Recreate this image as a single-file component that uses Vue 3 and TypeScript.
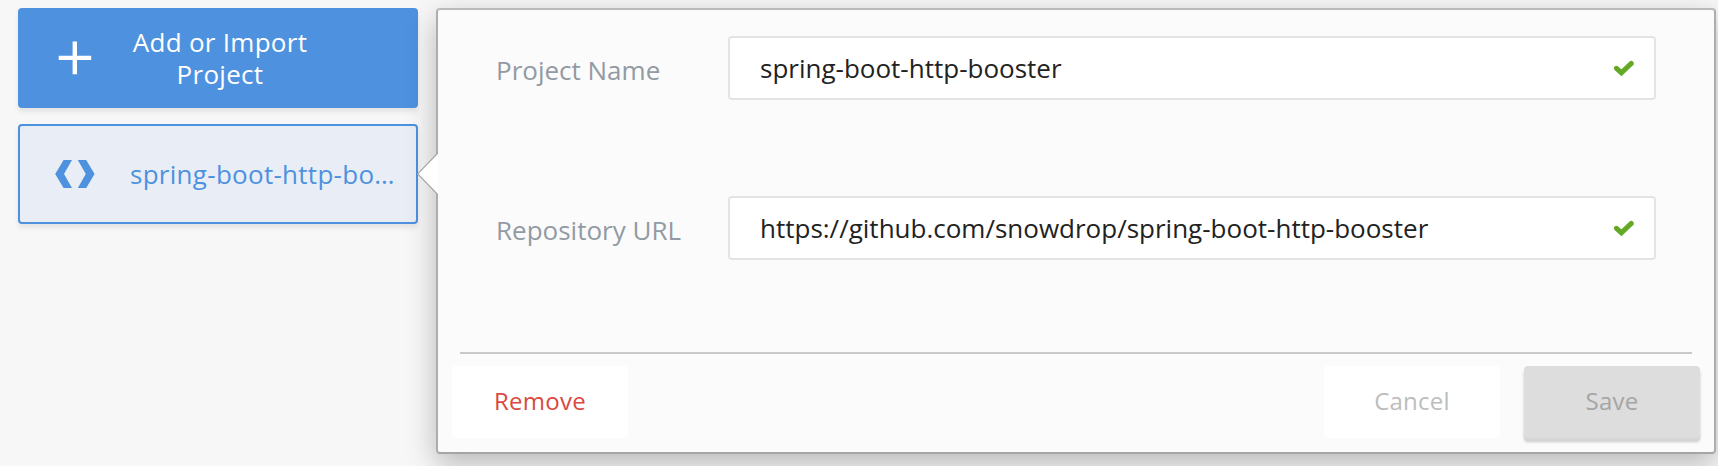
<script setup lang="ts">
interface Field {
  label: string
  value: string
}

const fields: Field[] = [
  { label: 'Project Name', value: 'spring-boot-http-booster' },
  { label: 'Repository URL', value: 'https://github.com/snowdrop/spring-boot-http-booster' },
]
</script>

<template>
  <main class="projects">
    <aside class="sidebar">
      <button class="tile add" type="button">
        <svg class="plus" width="34" height="34" viewBox="0 0 34 34">
          <path d="M14.6 0.5h4.4v14.2h14.2v4.4H19v14.2h-4.4V19.1H0.7v-4.4h13.9z" fill="#fff" />
        </svg>
        <span class="add-text">Add or Import<br />Project</span>
      </button>
      <button class="tile project" type="button">
        <svg class="code" width="40" height="28" viewBox="0 0 40 28">
          <path d="M8.6 0H17L9 14l8 14H8.6L0.2 14zM31.2 0h-8.4l8 14-8 14h8.4l8.4-14z" fill="#4e91df" />
        </svg>
        <span class="project-text">spring-boot-http-bo…</span>
      </button>
    </aside>

    <section class="panel">
      <svg class="pointer" width="21" height="44" viewBox="0 0 21 44">
        <path d="M21 0.8L0.7 21.8L21 42.8z" fill="#fff" />
        <path d="M21 0.8L0.7 21.8L21 42.8" fill="none" stroke="#a3a3a3" stroke-width="1.2" />
      </svg>
      <div class="fields">
        <div v-for="field in fields" :key="field.label" class="row">
          <span class="label">{{ field.label }}</span>
          <div class="input">
            <span class="value">{{ field.value }}</span>
            <svg class="check" width="22" height="18" viewBox="0 0 22 18">
              <path d="M3.5 8.3L8.4 12.8L18.3 3.4" fill="none" stroke="#63a924" stroke-width="5" stroke-linecap="round" />
            </svg>
          </div>
        </div>
      </div>
      <footer class="actions">
        <button class="btn remove" type="button">Remove</button>
        <button class="btn cancel" type="button">Cancel</button>
        <button class="btn save" type="button">Save</button>
      </footer>
    </section>
  </main>
</template>

<style>
body {
  margin: 0;
  background: #f7f7f7;
}
</style>

<style scoped>
.projects {
  box-sizing: border-box;
  width: 1718px;
  height: 466px;
  padding: 8px 2px 0 18px;
  display: flex;
  gap: 18px;
  overflow: hidden;
  background: #f7f7f7;
  font-family: 'Open Sans', sans-serif;
  font-size: 26px;
}
button {
  font: inherit;
  margin: 0;
  border: 0;
}
.sidebar {
  width: 400px;
  display: flex;
  flex-direction: column;
  gap: 16px;
}
.tile {
  box-sizing: border-box;
  width: 400px;
  height: 100px;
  padding: 0;
  display: flex;
  align-items: center;
  border-radius: 4px;
  letter-spacing: 0.28px;
  box-shadow: 0 4px 5px rgba(0, 0, 0, 0.08);
}
.add {
  background: #4e91df;
  color: #fff;
  line-height: 32px;
}
.plus {
  margin-left: 40px;
}
.add-text {
  width: 216px;
  margin-left: 20px;
  text-align: center;
}
.project {
  background: #e9eef6;
  border: 2px solid #4e91df;
  color: #4e91df;
}
.code {
  margin-left: 35px;
}
.project-text {
  margin-left: 35px;
  white-space: nowrap;
}
.panel {
  position: relative;
  box-sizing: border-box;
  width: 1280px;
  height: 446px;
  border: 2px solid;
  border-color: #b9b9b9 #adadad #a5a5a5;
  border-radius: 4px;
  background: #fbfbfb;
  box-shadow: 0 10px 30px rgba(0, 0, 0, 0.26);
}
.pointer {
  position: absolute;
  left: -21px;
  top: 142px;
}
.fields {
  box-sizing: border-box;
  height: 342px;
  margin: 0 22px;
  padding: 26px 36px 0;
  display: flex;
  flex-direction: column;
  gap: 96px;
}
.row {
  height: 64px;
  display: flex;
  align-items: center;
}
.label {
  width: 232px;
  padding-top: 3px;
  color: #929aa3;
}
.input {
  box-sizing: border-box;
  width: 928px;
  height: 64px;
  padding: 0 19px 0 30px;
  display: flex;
  align-items: center;
  justify-content: space-between;
  border: 2px solid #e4e4e4;
  border-radius: 4px;
  background: #fff;
  color: #222;
}
.check {
  margin-top: 2px;
}
.actions {
  position: relative;
  padding: 14px 14px 0;
  display: flex;
  gap: 24px;
}
.actions::before {
  content: '';
  position: absolute;
  left: 22px;
  right: 22px;
  top: 0;
  height: 2px;
  background: #c9c9c9;
}
.btn {
  width: 176px;
  height: 72px;
  padding: 0 0 4px;
  border-radius: 4px;
  background: #fff;
  font-size: 24px;
  letter-spacing: 0.24px;
}
.remove {
  margin-right: auto;
  color: #d74a42;
}
.cancel {
  color: #bdbdbd;
}
.save {
  background: #ddd;
  color: #a5a5a5;
  box-shadow: 0 3px 0 #d5d5d5, 0 4px 3px rgba(0, 0, 0, 0.2);
}
</style>
